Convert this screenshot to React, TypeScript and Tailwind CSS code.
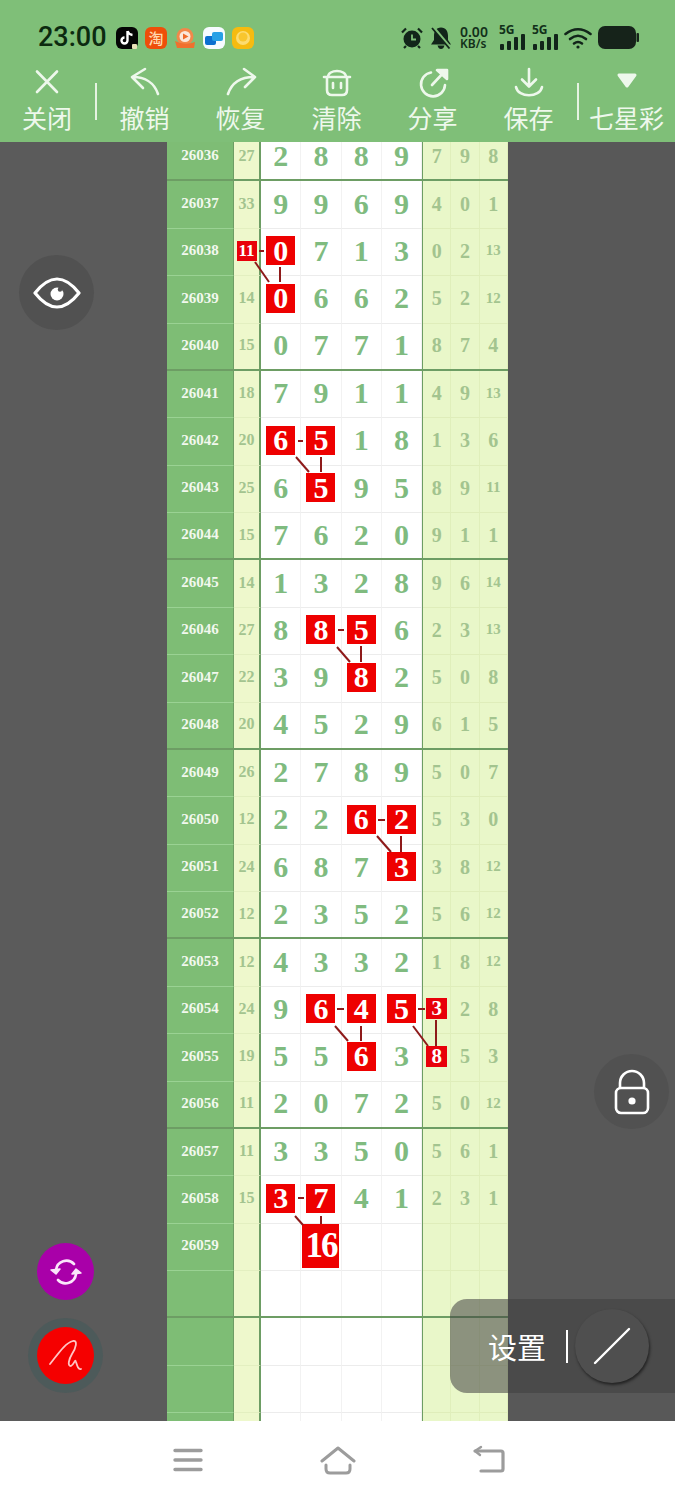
import React from "react";

type Row = { id: string; sum: string; main: string[]; tail: string[]; boxSum?: boolean; boxMain?: number[]; boxTail?: number[]; big?: number };

const R = (id: number, sum: number, main: string, tail: string, boxMain: number[] = [], boxTail: number[] = [], boxSum = false): Row => ({
  id: String(id),
  sum: String(sum),
  main: main.split(""),
  tail: tail.split(" "),
  boxMain,
  boxTail,
  boxSum,
});

const groups: Row[][] = [
  [R(26036, 27, "2889", "7 9 8")],
  [R(26037, 33, "9969", "4 0 1"), R(26038, 11, "0713", "0 2 13", [0], [], true), R(26039, 14, "0662", "5 2 12", [0]), R(26040, 15, "0771", "8 7 4")],
  [R(26041, 18, "7911", "4 9 13"), R(26042, 20, "6518", "1 3 6", [0, 1]), R(26043, 25, "6595", "8 9 11", [1]), R(26044, 15, "7620", "9 1 1")],
  [R(26045, 14, "1328", "9 6 14"), R(26046, 27, "8856", "2 3 13", [1, 2]), R(26047, 22, "3982", "5 0 8", [2]), R(26048, 20, "4529", "6 1 5")],
  [R(26049, 26, "2789", "5 0 7"), R(26050, 12, "2262", "5 3 0", [2, 3]), R(26051, 24, "6873", "3 8 12", [3]), R(26052, 12, "2352", "5 6 12")],
  [R(26053, 12, "4332", "1 8 12"), R(26054, 24, "9645", "3 2 8", [1, 2, 3], [0]), R(26055, 19, "5563", "8 5 3", [2], [0]), R(26056, 11, "2072", "5 0 12")],
  [
    R(26057, 11, "3350", "5 6 1"),
    R(26058, 15, "3741", "2 3 1", [0, 1]),
    { id: "26059", sum: "", main: ["", "", "", ""], tail: ["", "", ""], big: 1 },
    { id: "", sum: "", main: ["", "", "", ""], tail: ["", "", ""] },
  ],
  [0, 1, 2].map(() => ({ id: "", sum: "", main: ["", "", "", ""], tail: ["", "", ""] })),
];

const serif = "font-['Liberation_Serif',serif] font-bold";
const cjk = "font-['Noto_Sans_CJK_SC',sans-serif]";

function TableRow({ row, last }: { row: Row; last: boolean }) {
  const bb = last ? "border-b-2 border-b-[#6d9d64]" : "";
  return (
    <div className={`flex h-[47.375px] ${bb}`}>
      <div className={`w-[67px] shrink-0 flex items-center justify-center pb-[2px] bg-[#7ebd75] border-r border-r-[#6d9d64] ${last ? "" : "border-b border-b-[#9ad293]"} text-[15px] leading-none text-[#f2f8ee] ${serif}`}>
        {row.id}
      </div>
      <div className={`w-[27px] shrink-0 flex items-center justify-center pb-[2px] bg-[#eef8cc] border-r-2 border-r-[#6d9d64] ${last ? "" : "border-b border-b-[#e3efc0]"} text-[16px] leading-none text-[#a3c48f] ${serif}`}>
        {row.boxSum ? (
          <span className="w-[20px] h-[20px] shrink-0 flex items-center justify-center bg-[#e8000a] text-white text-[17px]">{row.sum}</span>
        ) : (
          row.sum
        )}
      </div>
      <div className="w-[161px] shrink-0 flex bg-white">
        {row.main.map((d, i) => (
          <div key={i} className={`flex-1 flex items-center justify-center pb-[2px] border-r border-r-[#f2f2f2] ${last ? "" : "border-b border-b-[#ececec]"} text-[30px] leading-[26px] text-[#7fbb7f] ${serif}`}>
            {row.boxMain?.includes(i) ? (
              <span className="w-[29px] h-[29px] shrink-0 flex items-center justify-center bg-[#ee0000] text-white">{d}</span>
            ) : row.big === i ? (
              <span className="w-[37px] h-[44px] shrink-0 flex items-center justify-center bg-[#ee0000] text-white text-[35px] tracking-[-2px]">16</span>
            ) : (
              d
            )}
          </div>
        ))}
      </div>
      <div className="w-[86px] shrink-0 flex border-l border-l-[#6d9d64] bg-[#e9f7c9]">
        {row.tail.map((d, i) => (
          <div key={i} className={`flex-1 flex items-center justify-center pb-[2px] border-r border-r-[#e0efbb] ${last ? "" : "border-b border-b-[#dfedba]"} ${d.length > 1 ? "text-[15px]" : "text-[20px]"} leading-none text-[#a3c48f] ${serif}`}>
            {row.boxTail?.includes(i) ? (
              <span className="w-[21px] h-[21px] shrink-0 flex items-center justify-center bg-[#e8000a] text-white text-[21px]">{d}</span>
            ) : (
              d
            )}
          </div>
        ))}
      </div>
    </div>
  );
}

const lines: number[][] = [
  [259, 251, 264, 251], [280, 267, 280, 282], [255, 262, 269, 282],
  [298, 441, 303, 441], [321, 457, 321, 472], [296, 457, 309, 472],
  [338, 630, 344, 630], [361, 646, 361, 662], [337, 647, 350, 662],
  [378, 820, 385, 820], [401, 836, 401, 852], [377, 836, 391, 852],
  [337, 1009, 344, 1009], [361, 1026, 361, 1041], [335, 1026, 348, 1041],
  [418, 1009, 425, 1009], [436, 1020, 436, 1046], [413, 1026, 428, 1046],
  [298, 1198, 304, 1198], [321, 1216, 321, 1224], [295, 1216, 303, 1225],
];

function ToolIcon({ children }: { children: React.ReactNode }) {
  return (
    <svg width="32" height="32" viewBox="0 0 32 32" fill="none" stroke="#eef8ec" strokeWidth="2.6" strokeLinecap="round" strokeLinejoin="round">
      {children}
    </svg>
  );
}

const tools: { label: string; w: string; icon: React.ReactNode }[] = [
  { label: "关闭", w: "w-[95px]", icon: <ToolIcon><path d="M6 4.5 L26 25 M26 4.5 L6 25" /></ToolIcon> },
  { label: "撤销", w: "w-[96px]", icon: <ToolIcon><path d="M16 2 L3 10 L14 21 M4 10 C15 10 25 15 29 27" /></ToolIcon> },
  { label: "恢复", w: "w-[96px]", icon: <ToolIcon><path d="M19 2 L30 10 L20 20 M29 10 C17 10 7 15 3 27" /></ToolIcon> },
  {
    label: "清除",
    w: "w-[96px]",
    icon: (
      <ToolIcon>
        <path d="M3 10 L29 10 M7 10 C7 2 25 2 25 10 M6 10 L6 23 Q6 28 11 28 L21 28 Q26 28 26 23 L26 10 M12 16 L12 21 M20 16 L20 21" />
      </ToolIcon>
    ),
  },
  {
    label: "分享",
    w: "w-[96px]",
    icon: (
      <ToolIcon>
        <path d="M14 5.5 A12 12 0 1 0 28 18 M15 18 L28 4" />
        <path d="M20 3 L30 3 L30 12 Z" fill="#eef8ec" />
      </ToolIcon>
    ),
  },
  { label: "保存", w: "w-[96px]", icon: <ToolIcon><path d="M16 2 L16 19 M9 12.5 L16 19.5 L23 12.5 M3 20 C5 31 27 31 29 20" /></ToolIcon> },
];

function Sep() {
  return <div className="w-[2px] h-[37px] mt-[16px] bg-[#e6f3e2] shrink-0" />;
}

function Tool({ label, w, icon }: { label: string; w: string; icon: React.ReactNode }) {
  return (
    <div className={`${w} shrink-0 flex flex-col items-center pr-[1px]`}>
      <div className="h-[32px] flex items-center">{icon}</div>
      <div className={`-mt-[1px] text-[25px] leading-[38px] text-[#eef8ec] whitespace-nowrap ${cjk}`}>{label}</div>
    </div>
  );
}

function Signal() {
  return (
    <div className="relative w-[26px] h-[24px]">
      <span className="absolute left-0 top-[-2px] text-[12px] leading-[12px] font-bold text-[#12301a] font-['Noto_Sans',sans-serif]">5G</span>
      <svg className="absolute left-0 bottom-0" width="26" height="24" viewBox="0 0 26 24" fill="#12251a">
        <rect x="1" y="18" width="4" height="6" rx="1" />
        <rect x="8" y="15" width="4" height="9" rx="1" />
        <rect x="15" y="11" width="4" height="13" rx="1" />
        <rect x="22" y="8" width="4" height="16" rx="1" />
      </svg>
    </div>
  );
}

export default function App() {
  return (
    <div className="relative w-[675px] h-[1500px] overflow-hidden bg-white flex flex-col">
      {/* header */}
      <header className="h-[142px] shrink-0 bg-[#7fbf78] flex flex-col">
        <div className="h-[67px] shrink-0 flex items-center pt-[8px]">
          <span className="ml-[38px] w-[78px] text-[27px] leading-none font-medium text-[#0c2a10] font-['Roboto',sans-serif]">23:00</span>
          <div className="flex items-center gap-[7px]">
            <svg width="22" height="22" viewBox="0 0 22 22">
              <rect width="22" height="22" rx="6" fill="#050505" />
              <path d="M11.5 4 L11.5 13.5 A3 3 0 1 1 8.5 10.5 M11.5 4 Q12.5 7.5 16.5 8" fill="none" stroke="#fff" strokeWidth="2.4" />
              <rect x="16" y="17" width="5" height="5" rx="1" fill="#e8e2b8" />
            </svg>
            <span className={`w-[22px] h-[22px] rounded-[6px] bg-[#ee4f0a] flex items-center justify-center text-[15px] leading-none font-medium text-[#ffd9b0] ${cjk}`}>淘</span>
            <svg width="22" height="22" viewBox="0 0 22 22">
              <circle cx="11" cy="9.5" r="8.5" fill="#f2884a" />
              <circle cx="11" cy="9.5" r="5.5" fill="#fbe7da" />
              <path d="M9 6.5 L14.5 9.5 L9 12.5 Z" fill="#f06a2a" />
              <path d="M1 14 Q11 19 21 15 L20 21 L3 21 Z" fill="#f0702e" />
            </svg>
            <svg width="22" height="22" viewBox="0 0 22 22">
              <rect width="22" height="22" rx="6" fill="#f6fbff" />
              <rect x="2" y="9" width="11" height="9" rx="2" fill="#0c6fd0" />
              <rect x="9" y="5" width="11" height="9" rx="2" fill="#27a0e6" />
            </svg>
            <svg width="22" height="22" viewBox="0 0 22 22">
              <rect width="22" height="22" rx="6" fill="#f6bb10" />
              <circle cx="11" cy="11" r="7" fill="#fcdc70" />
              <circle cx="11" cy="10" r="4.5" fill="#f8c62e" />
            </svg>
          </div>
          <div className="ml-[147px] flex items-center">
            <svg width="22" height="22" viewBox="0 0 22 22" fill="#12251a">
              <circle cx="11" cy="12" r="8.5" />
              <path d="M1 5.5 L5 1.5 M21 5.5 L17 1.5 M5 19 L3 21 M17 19 L19 21" stroke="#12251a" strokeWidth="2.2" />
              <path d="M11 7.5 L11 12.5 L15 12.5" fill="none" stroke="#7fbf78" strokeWidth="1.8" />
            </svg>
            <svg className="ml-[7px]" width="22" height="22" viewBox="0 0 22 22" fill="#12251a">
              <path d="M11 0.5 C6 0.5 4 4.5 4 9 L4 13 L1 17.5 L21 17.5 L18 13 L18 9 C18 4.5 16 0.5 11 0.5 Z M7.5 18.5 L14.5 18.5 Q13.5 22 11 22 Q8.5 22 7.5 18.5 Z" />
              <path d="M3.5 0.5 L20.5 21" stroke="#7fbf78" strokeWidth="3" />
              <path d="M2 1 L19.5 21.5" stroke="#12251a" strokeWidth="1.8" />
            </svg>
            <div className="ml-[8px] w-[32px] flex flex-col items-start font-['Noto_Sans',sans-serif] font-semibold text-[#12301a]">
              <span className="text-[14px] leading-[12px]">0.00</span>
              <span className="text-[12px] leading-[11px]">KB/s</span>
            </div>
            <div className="ml-[7px]"><Signal /></div>
            <div className="ml-[7px]"><Signal /></div>
            <svg className="ml-[6px]" width="28" height="22" viewBox="0 0 28 22" fill="none" stroke="#12251a" strokeWidth="2.6" strokeLinecap="round">
              <path d="M1.5 7 Q14 -2.5 26.5 7" />
              <path d="M6 12 Q14 5.5 22 12" />
              <path d="M10 16.5 Q14 13.5 18 16.5" />
              <circle cx="14" cy="20" r="1.6" fill="#12251a" stroke="none" />
            </svg>
            <svg className="ml-[6px]" width="41" height="23" viewBox="0 0 41 23" fill="#16231a">
              <rect x="0" y="0" width="38" height="23" rx="7" />
              <rect x="38.5" y="7" width="2.5" height="9" rx="1" />
            </svg>
          </div>
        </div>
        <div className="flex">
          <Tool {...tools[0]} />
          <Sep />
          {tools.slice(1).map((t) => (
            <Tool key={t.label} {...t} />
          ))}
          <Sep />
          <Tool
            label="七星彩"
            w="w-[96px]"
            icon={
              <svg width="32" height="32" viewBox="0 0 32 32" fill="#eef8ec" stroke="#eef8ec" strokeWidth="3" strokeLinejoin="round">
                <path d="M8 8 L24 8 L16 19 Z" />
              </svg>
            }
          />
        </div>
      </header>

      {/* body */}
      <main className="relative h-[1279px] shrink-0 overflow-hidden flex bg-[#5b5b5b]">
        <div className="w-[167px] shrink-0" />
        <div className="w-[341px] shrink-0 -mt-[8px]">
          {groups.map((g, gi) => (
            <div key={gi}>
              {g.map((r, ri) => (
                <TableRow key={ri} row={r} last={ri === g.length - 1 && gi < groups.length - 1} />
              ))}
            </div>
          ))}
        </div>
        <div className="flex-1 bg-[#585858]" />

        {/* connecting lines */}
        <svg className="absolute left-[167px] top-0 pointer-events-none" width="341" height="1279" viewBox="167 142 341 1279" stroke="#8e1a1a" strokeWidth="2">
          {lines.map((l, i) => (
            <line key={i} x1={l[0]} y1={l[1]} x2={l[2]} y2={l[3]} />
          ))}
        </svg>

        {/* eye */}
        <div className="absolute left-[19px] top-[113px] w-[75px] h-[75px] rounded-full bg-[#515151] flex items-center justify-center">
          <svg width="48" height="34" viewBox="0 0 48 34" fill="none">
            <path d="M2 17 Q13 3 24 3 Q35 3 46 17 Q35 31 24 31 Q13 31 2 17 Z" stroke="#fff" strokeWidth="3.2" strokeLinejoin="round" />
            <circle cx="24" cy="18" r="6.5" fill="#fff" />
            <circle cx="27" cy="13.5" r="2.2" fill="#515151" />
          </svg>
        </div>

        {/* lock */}
        <div className="absolute left-[594px] top-[912px] w-[75px] h-[75px] rounded-full bg-[#515151] flex items-center justify-center">
          <svg width="36" height="46" viewBox="0 0 36 46" fill="none" stroke="#fff" strokeWidth="2.6">
            <path d="M6 19 L6 14 A12 12 0 0 1 30 14 L30 19" />
            <rect x="2" y="19" width="32" height="25" rx="5" />
            <circle cx="18" cy="32" r="3.6" fill="#fff" stroke="none" />
          </svg>
        </div>

        {/* refresh */}
        <div className="absolute left-[37px] top-[1101px] w-[57px] h-[57px] rounded-full bg-[#a900a9] flex items-center justify-center">
          <svg width="32" height="28" viewBox="0 0 32 28" fill="none" stroke="#fbe6fb" strokeWidth="2.6" strokeLinecap="round">
            <path d="M6 12 A10.5 10.5 0 0 1 24 6" />
            <path d="M26 16 A10.5 10.5 0 0 1 8 22" />
            <path d="M1 12 L6 16 L10 11 Z" fill="#fbe6fb" strokeWidth="1.5" strokeLinejoin="round" />
            <path d="M31 15 L26 11 L22 16 Z" fill="#fbe6fb" strokeWidth="1.5" strokeLinejoin="round" />
          </svg>
        </div>

        {/* pen */}
        <div className="absolute left-[28px] top-[1176px] w-[75px] h-[75px] rounded-full bg-[#4d5a5a] flex items-center justify-center">
          <div className="w-[57px] h-[57px] rounded-full bg-[#f50000] flex items-center justify-center">
            <svg width="36" height="36" viewBox="0 0 36 36" fill="none" stroke="#ffc4c4" strokeWidth="1.8" strokeLinecap="round" strokeLinejoin="round">
              <path d="M2 26 C10 16 17 5 25 3 C30 2 28 10 24 16 C21 21 19 28 23 28 C26 27 27 20 28 24 C29 27 30 32 33 31" />
            </svg>
          </div>
        </div>

        {/* settings panel */}
        <div className="absolute left-[450px] top-[1157px] w-[225px] h-[94px] rounded-l-[17px] bg-[#404040]/55 flex items-center">
          <span className={`ml-[38px] text-[29px] leading-none text-white ${cjk}`}>设置</span>
          <span className="ml-[20px] w-[2px] h-[33px] bg-white shrink-0" />
          <div className="ml-[7px] w-[74px] h-[74px] shrink-0 rounded-full bg-[#4f4f4f] shadow-[1px_2px_3px_rgba(0,0,0,0.55)] flex items-center justify-center">
            <svg width="38" height="38" viewBox="0 0 38 38" stroke="#fff" strokeWidth="2.4" strokeLinecap="round">
              <line x1="2" y1="36" x2="36" y2="2" />
            </svg>
          </div>
        </div>
      </main>

      {/* nav */}
      <nav className="flex-1 flex items-center bg-white pl-[172px] pb-[2px]">
        <svg width="32" height="26" viewBox="0 0 32 26" stroke="#9c9c9c" strokeWidth="3.4" strokeLinecap="round">
          <path d="M3 3.5 L29 3.5 M3 13 L29 13 M3 22.5 L29 22.5" />
        </svg>
        <svg className="ml-[116px]" width="36" height="30" viewBox="0 0 36 30" fill="none" stroke="#9c9c9c" strokeWidth="3" strokeLinecap="round" strokeLinejoin="round">
          <path d="M2 16 L18 3 L34 16" />
          <path d="M6 20 L6 24 Q6 28 10 28 L26 28 Q30 28 30 24 L30 20" />
        </svg>
        <svg className="ml-[116px]" width="34" height="30" viewBox="0 0 34 30" fill="none" stroke="#9c9c9c" strokeWidth="3.2" strokeLinecap="round" strokeLinejoin="round">
          <path d="M3 6 L29 6 Q31 6 31 8 L31 24 Q31 26 29 26 L9 26" />
          <path d="M9 2 L3 6 L8 10" strokeWidth="2.4" />
        </svg>
      </nav>
    </div>
  );
}
